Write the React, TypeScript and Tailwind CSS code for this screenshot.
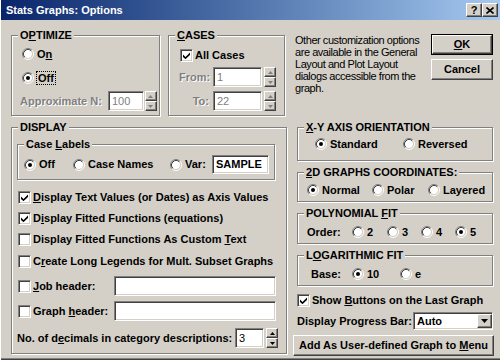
import React from 'react';

const sunken =
  'border border-t-[#808080] border-l-[#808080] border-r-white border-b-white shadow-[inset_1px_1px_0_#404040,inset_-1px_-1px_0_#d4d0c8]';
const raised =
  'border border-t-white border-l-white border-r-[#404040] border-b-[#404040] shadow-[inset_-1px_-1px_0_#808080]';
const etched = 'border border-[#808080] shadow-[inset_1px_1px_0_#fff,1px_1px_0_#fff]';
const dim = 'text-[#808080] [text-shadow:1px_1px_0_#fff]';

const Radio = ({ checked = false }: { checked?: boolean }) => (
  <svg width="12" height="12" viewBox="0 0 12 12" className="shrink-0">
    <circle cx="6" cy="6" r="4.2" fill="#fff" />
    <path d="M2.11 9.89A5.5 5.5 0 0 1 9.89 2.11" fill="none" stroke="#808080" />
    <path d="M9.89 2.11A5.5 5.5 0 0 1 2.11 9.89" fill="none" stroke="#fff" />
    <path d="M2.82 9.18A4.5 4.5 0 0 1 9.18 2.82" fill="none" stroke="#404040" />
    <path d="M9.18 2.82A4.5 4.5 0 0 1 2.82 9.18" fill="none" stroke="#d4d0c8" />
    {checked && <circle cx="6" cy="6" r="2" fill="#000" />}
  </svg>
);

const Check = ({ checked = false }: { checked?: boolean }) => (
  <span className={`w-[13px] h-[13px] shrink-0 bg-white flex items-center justify-center ${sunken}`}>
    {checked && (
      <svg width="7" height="7" viewBox="0 0 7 7">
        <polygon points="0,2.5 2.5,5 7,0.5 7,3 2.5,7.2 0,5" fill="#000" />
      </svg>
    )}
  </span>
);

const SpinBtn = ({ up, disabled }: { up?: boolean; disabled?: boolean }) => (
  <span className={`h-[10px] w-[12px] bg-[#d4d0c8] flex items-center justify-center ${raised}`}>
    <svg width="5" height="3" viewBox="0 0 5 3">
      <path d={up ? 'M2.5 0L5 3H0z' : 'M0 0h5L2.5 3z'} fill={disabled ? '#808080' : '#000'} />
    </svg>
  </span>
);

const Spin = ({ disabled, className = '' }: { disabled?: boolean; className?: string }) => (
  <span className={`flex flex-col ${className}`}>
    <SpinBtn up disabled={disabled} />
    <SpinBtn disabled={disabled} />
  </span>
);

const Field = ({ children, className = '' }: { children?: React.ReactNode; className?: string }) => (
  <span className={`bg-white flex items-center pl-[3px] ${sunken} ${className}`}>{children}</span>
);

const Button = ({ children, className = '' }: { children: React.ReactNode; className?: string }) => (
  <span className={`bg-[#d4d0c8] flex items-center justify-center ${raised} ${className}`}>
    <span>{children}</span>
  </span>
);

const Legend = ({ children }: { children: React.ReactNode }) => (
  <legend className="ml-[6px] px-[2px] bg-[#d4d0c8] leading-[13px]">{children}</legend>
);

const Opt = ({ checked, children, className = '' }: { checked?: boolean; children: React.ReactNode; className?: string }) => (
  <span className={`flex items-center gap-[3px] shrink-0 ${className}`}>
    <Radio checked={checked} />
    <span>{children}</span>
  </span>
);

const CheckRow = ({ checked, children, className = '' }: { checked?: boolean; children: React.ReactNode; className?: string }) => (
  <div className={`flex items-center gap-[2px] h-[14px] ${className}`}>
    <Check checked={checked} />
    <span>{children}</span>
  </div>
);

export default function App() {
  return (
    <div className="w-[500px] h-[360px] bg-[#d4d0c8] overflow-hidden font-['Liberation_Sans',Arial,sans-serif] text-[11px] font-bold text-black leading-[13px] shadow-[inset_1px_0_0_#fff,inset_0_-1px_0_#404040,inset_0_-2px_0_#808080]">
      {/* title bar */}
      <div className="ml-[1px] h-[20px] flex items-center justify-between bg-linear-to-r from-[#0a246a] to-[#a6caf0] pl-[5px] pr-[2px]">
        <span className="text-white">Stats Graphs: Options</span>
        <div className="flex">
          <Button className="w-[16px] h-[14px]">?</Button>
          <Button className="w-[16px] h-[14px]">
            <svg width="8" height="7" viewBox="0 0 8 7" className="block">
              <path d="M0.5 0.5l7 6M7.5 0.5l-7 6" stroke="#000" strokeWidth="1.6" />
            </svg>
          </Button>
        </div>
      </div>

      {/* top row */}
      <div className="flex mt-[9px] ml-[11px]">
        <fieldset className={`w-[149px] h-[87px] ${etched}`}>
          <Legend>
            O<u>P</u>TIMIZE
          </Legend>
          <Opt className="ml-[10px] mt-[4px] h-[16px]">
            O<u>n</u>
          </Opt>
          <Opt checked className="ml-[10px] mt-[8px] h-[16px]">
            <span className="outline-1 outline-dotted outline-black px-[1px]">Off</span>
          </Opt>
          <div className="flex items-center ml-[8px] mt-[5px]">
            <span className={dim}>Approximate N:</span>
            <Field className={`ml-[6px] w-[36px] h-[20px] font-normal ${dim}`}>100</Field>
            <Spin disabled className="ml-[1px]" />
          </div>
        </fieldset>

        <fieldset className={`w-[117px] h-[87px] ml-[8px] ${etched}`}>
          <Legend>
            <u>C</u>ASES
          </Legend>
          <CheckRow checked className="ml-[11px] mt-[6px]">
            All Cases
          </CheckRow>
          <div className="flex items-center ml-[10px] mt-[5px]">
            <span className={`w-[30px] text-right ${dim}`}>From:</span>
            <Field className={`ml-[4px] w-[49px] h-[20px] font-normal ${dim}`}>1</Field>
            <Spin disabled className="ml-[2px]" />
          </div>
          <div className="flex items-center ml-[10px] mt-[4px]">
            <span className={`w-[30px] text-right ${dim}`}>To:</span>
            <Field className={`ml-[4px] w-[49px] h-[20px] font-normal ${dim}`}>22</Field>
            <Spin disabled className="ml-[2px]" />
          </div>
        </fieldset>

        <div className="ml-[10px] mt-[5px] w-[133px] font-normal text-[11px] tracking-[-0.45px] leading-[12px] whitespace-nowrap">
          <div>Other customization options</div>
          <div>are available in the General</div>
          <div>Layout and Plot Layout</div>
          <div>dialogs accessible from the</div>
          <div>graph.</div>
        </div>

        <div className="ml-[3px] mt-[5px] w-[62px] flex flex-col">
          <span className="border border-black">
            <Button className="h-[19px]">
              <u>O</u>K
            </Button>
          </span>
          <Button className="h-[21px] mt-[4px]">Cancel</Button>
        </div>
      </div>

      {/* bottom row */}
      <div className="flex mt-[5px] ml-[11px]">
        <fieldset className={`w-[276px] h-[233px] ${etched}`}>
          <Legend>DISPLAY</Legend>
          <fieldset className={`ml-[5px] mt-[4px] w-[258px] h-[42px] ${etched}`}>
            <Legend>
              Case <u>L</u>abels
            </Legend>
            <div className="flex items-center ml-[6px] mt-[4px] h-[19px]">
              <Opt checked className="w-[49px]">
                Off
              </Opt>
              <Opt className="w-[97px]">Case Names</Opt>
              <Opt className="w-[42px]">Var:</Opt>
              <Field className="w-[57px] h-[19px]">SAMPLE</Field>
            </div>
          </fieldset>
          <CheckRow checked className="ml-[6px] mt-[10px]">
            <u>D</u>isplay Text Values (or Dates) as Axis Values
          </CheckRow>
          <CheckRow checked className="ml-[6px] mt-[7px]">
            D<u>i</u>splay Fitted Functions (equations)
          </CheckRow>
          <CheckRow className="ml-[6px] mt-[7px]">
            Display Fitted Functions As Custom <u>T</u>ext
          </CheckRow>
          <CheckRow className="ml-[6px] mt-[8px]">
            C<u>r</u>eate Long Legends for Mult. Subset Graphs
          </CheckRow>
          <div className="flex items-center ml-[6px] mt-[8px]">
            <CheckRow className="w-[96px]">
              <u>J</u>ob header:
            </CheckRow>
            <Field className="w-[162px] h-[20px]" />
          </div>
          <div className="flex items-center ml-[6px] mt-[5px]">
            <CheckRow className="w-[96px]">
              Graph <u>h</u>eader:
            </CheckRow>
            <Field className="w-[162px] h-[20px]" />
          </div>
          <div className="flex items-center ml-[5px] mt-[7px]">
            <span className="w-[218px]">
              No. of d<u>e</u>cimals in category descriptions:
            </span>
            <Field className="w-[29px] h-[20px] font-normal">3</Field>
            <Spin className="ml-[2px]" />
          </div>
        </fieldset>

        <div className="ml-[10px] w-[196px] flex flex-col">
          <fieldset className={`h-[40px] ${etched}`}>
            <Legend>
              <u>X</u>-Y AXIS ORIENTATION
            </Legend>
            <div className="flex items-center ml-[17px] mt-[2px] h-[16px]">
              <Opt checked className="w-[88px]">
                Standard
              </Opt>
              <Opt>Reversed</Opt>
            </div>
          </fieldset>
          <fieldset className={`h-[36px] mt-[5px] ${etched}`}>
            <Legend>
              <u>2</u>D GRAPHS COORDINATES:
            </Legend>
            <div className="flex items-center ml-[9px] mt-[3px] h-[16px]">
              <Opt checked className="w-[65px]">
                Normal
              </Opt>
              <Opt className="w-[56px]">Polar</Opt>
              <Opt>Layered</Opt>
            </div>
          </fieldset>
          <fieldset className={`h-[37px] mt-[5px] ${etched}`}>
            <Legend>
              POLYNOMIAL <u>F</u>IT
            </Legend>
            <div className="flex items-center ml-[9px] mt-[4px] h-[16px]">
              <span className="w-[45px]">Order:</span>
              <Opt className="w-[35px]">2</Opt>
              <Opt className="w-[34px]">3</Opt>
              <Opt className="w-[34px]">4</Opt>
              <Opt checked>5</Opt>
            </div>
          </fieldset>
          <fieldset className={`h-[37px] mt-[5px] ${etched}`}>
            <Legend>
              L<u>O</u>GARITHMIC FIT
            </Legend>
            <div className="flex items-center ml-[13px] mt-[4px] h-[16px]">
              <span className="w-[41px]">Base:</span>
              <Opt checked className="w-[48px]">
                10
              </Opt>
              <Opt>e</Opt>
            </div>
          </fieldset>
          <CheckRow checked className="mt-[7px] gap-[1px]">
            Show <u>B</u>uttons on the Last Graph
          </CheckRow>
          <div className="flex items-center mt-[5px]">
            <span className="w-[116px]">Display Progress Bar:</span>
            <span className={`w-[80px] h-[18px] bg-white flex items-center ${sunken}`}>
              <span className="flex-1 pl-[3px]">Auto</span>
              <Button className="w-[15px] h-[14px]">
                <svg width="7" height="4" viewBox="0 0 7 4" className="block">
                  <path d="M0 0h7L3.5 4z" fill="#000" />
                </svg>
              </Button>
            </span>
          </div>
          <Button className="-ml-[4px] w-[201px] h-[21px] mt-[5px]">
            Add As User-defined Graph to <u>M</u>enu
          </Button>
        </div>
      </div>
    </div>
  );
}
